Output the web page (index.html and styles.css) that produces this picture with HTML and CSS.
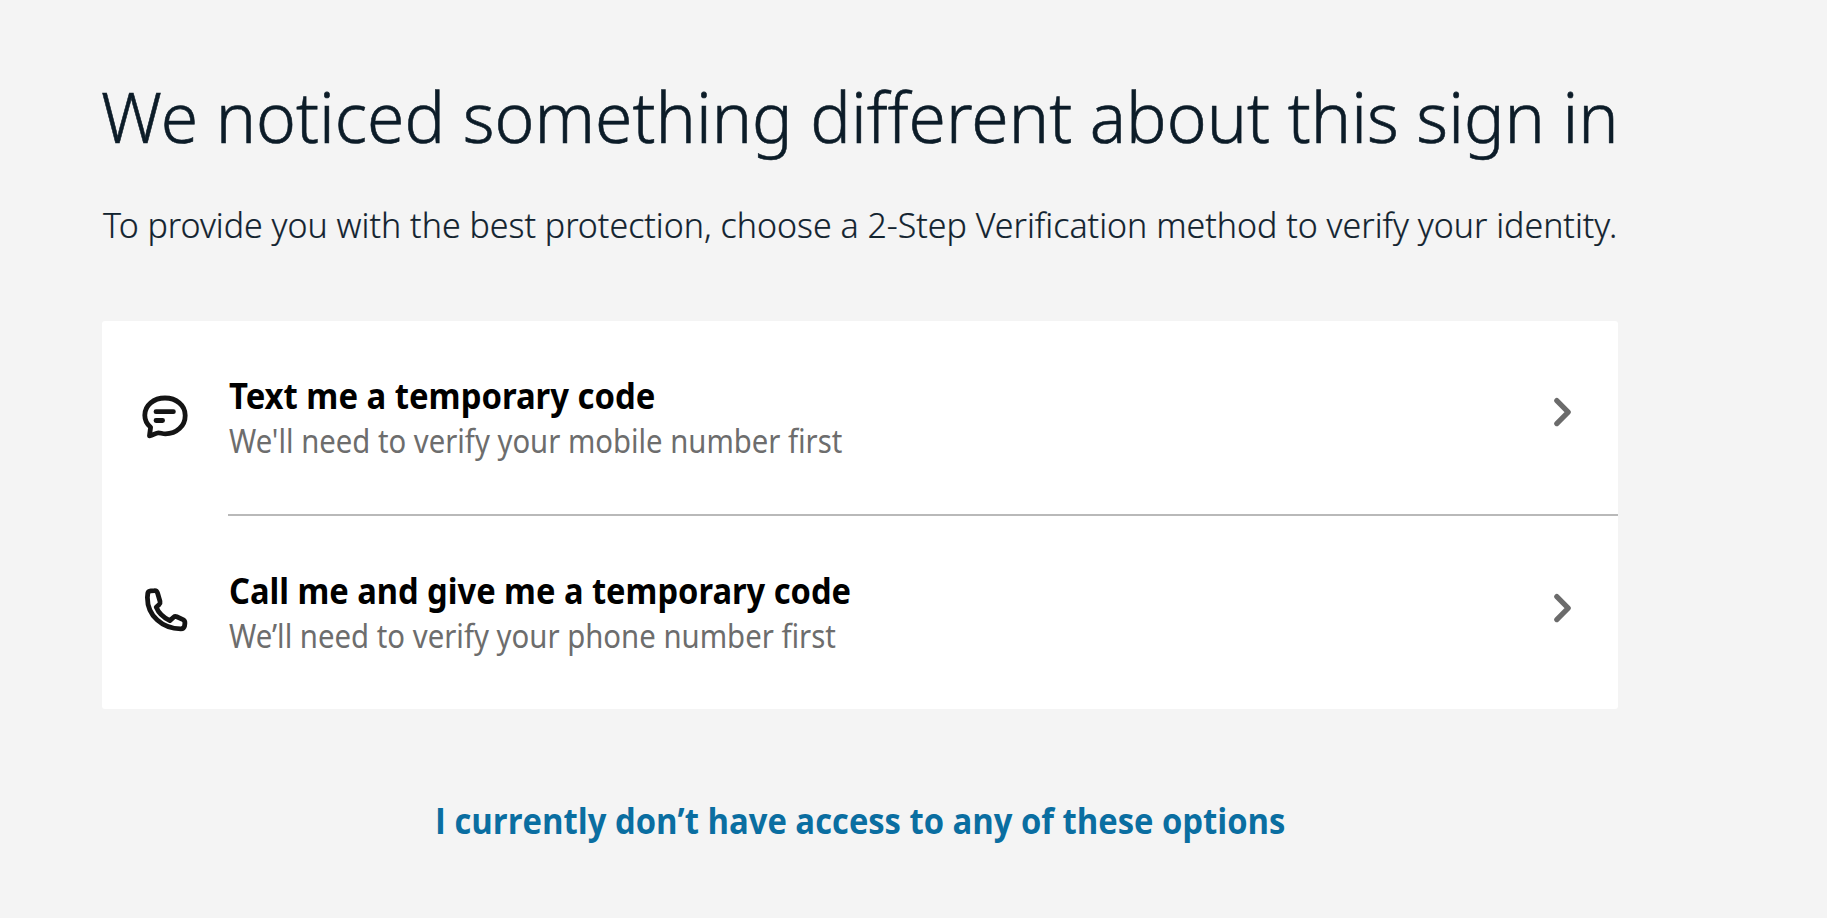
FILE: index.html
```html
<!DOCTYPE html>
<html lang="en">
<head>
<meta charset="utf-8">
<title>Verify your identity</title>
<link rel="stylesheet" href="styles.css">
</head>
<body>
<main class="page">
  <h1 class="heading"><span class="fit fit-heading">We noticed something different about this sign in</span></h1>
  <p class="intro"><span class="fit fit-intro">To provide you with the best protection, choose a 2-Step Verification method to verify your identity.</span></p>
  <div class="card">
    <a class="option">
      <svg class="icon" viewBox="0 0 70 70" fill="none" stroke="#141414" stroke-width="4.8" stroke-linecap="round" stroke-linejoin="round"><path d="M19.5 55.8L20.6 47.3C16.8 44 14.8 40 14.8 35.2C14.8 25.2 23.8 18 35 18C46.2 18 55.2 25.2 55.2 35.4C55.2 46 46.6 53.8 35.4 53.8C32.6 53.8 30.4 52.8 28.4 52.8C25.6 52.8 23.4 55.2 19.5 55.8Z"/><path d="M26 31.7H43.4M26 40.5H32.6"/></svg>
      <span class="text">
        <span class="title fit fit-text">Text me a temporary code</span>
        <span class="note fit fit-mobile">We'll need to verify your mobile number first</span>
      </span>
      <svg class="chevron" viewBox="0 0 18 32" fill="none" stroke="#6b6b6b" stroke-width="5.2" stroke-linecap="round" stroke-linejoin="round"><path d="M2.8 4.6L14.2 16.1L2.8 27.6"/></svg>
    </a>
    <a class="option option-next">
      <svg class="icon" viewBox="0 0 70 70" fill="none" stroke="#141414" stroke-width="4.8" stroke-linecap="round" stroke-linejoin="round"><path d="M17.8 18.2Q18.2 16 20.8 15.8L24.4 15.6Q26.8 15.4 27.6 18.2L30 26.4Q30.4 28.2 29.2 29.4L26.2 32.2C28.4 37.6 33.8 42.8 39.8 45.6L43.6 42.2Q45 41 46.8 41.8L53 44.6Q55 45.6 54.9 48L54.6 50.8Q54 53.9 50.8 53.9C32.6 53.8 17.4 41 17.4 22.4Z"/></svg>
      <span class="text">
        <span class="title fit fit-call">Call me and give me a temporary code</span>
        <span class="note fit fit-phone">We’ll need to verify your phone number first</span>
      </span>
      <svg class="chevron" viewBox="0 0 18 32" fill="none" stroke="#6b6b6b" stroke-width="5.2" stroke-linecap="round" stroke-linejoin="round"><path d="M2.8 4.6L14.2 16.1L2.8 27.6"/></svg>
    </a>
  </div>
  <a class="fallback"><span class="fit fit-link">I currently don’t have access to any of these options</span></a>
</main>
<script>
  // Condense each line to the width given by its --w property.
  document.querySelectorAll('.fit').forEach(function (el) {
    var target = parseFloat(getComputedStyle(el).getPropertyValue('--w'));
    el.style.transform = 'scaleX(' + target / el.offsetWidth + ')';
  });
</script>
</body>
</html>
```
FILE: styles.css
```css
* { box-sizing: border-box; }
body {
  margin: 0;
  background: #f4f4f4;
  font-family: "Noto Sans", "Open Sans", sans-serif;
  overflow: hidden;
}
.page {
  display: flex;
  flex-direction: column;
  width: 1618px;
  height: 918px;
  padding: 69px 0 0 101px;
}
.fit {
  display: block;
  width: max-content;
  white-space: nowrap;
  transform-origin: left center;
}
.fit-heading { --w: 1518; }
.fit-intro { --w: 1514; }
.fit-text { --w: 426; }
.fit-mobile { --w: 613; }
.fit-call { --w: 622; }
.fit-phone { --w: 607; }
.fit-link { --w: 850; }
.heading {
  margin: 0;
  height: 94px;
  font-size: 70px;
  line-height: 94px;
  font-weight: 300;
  color: #0c1c28;
  -webkit-text-stroke: 0.6px #0c1c28;
}
.intro {
  margin: 38px 0 72px 2px;
  height: 48px;
  font-size: 35px;
  line-height: 48px;
  font-weight: 300;
  color: #12232f;
  -webkit-text-stroke: 0.2px #12232f;
}
.card {
  width: 1516px;
  height: 388px;
  margin-left: 1px;
  background: #fff;
  border-radius: 3px;
  display: grid;
  grid-template-rows: 193px 195px;
}
.option { display: flex; align-items: flex-start; }
.icon { flex: none; width: 70px; height: 70px; margin: 59px 0 0 28px; }
.text {
  flex: 1;
  height: 195px;
  margin-left: 28px;
  padding: 51px 0 0 1px;
  border-bottom: 2px solid #b9b9b9;
}
.chevron {
  flex: none;
  width: 64px;
  height: 195px;
  padding: 75px 46px 86px 0;
  border-bottom: 2px solid #b9b9b9;
}
.option-next .icon { margin-top: 61px; }
.option-next .text { padding-top: 53px; border: 0; }
.option-next .chevron { padding: 78px 46px 85px 0; border: 0; }
.title { font-size: 35px; line-height: 48px; font-weight: 700; color: #000; }
.note { font-size: 32px; line-height: 44px; font-weight: 400; color: #6d6d6d; margin-top: -1px; }
.fallback {
  width: max-content;
  margin: 88px 0 0 334px;
  font-family: "Open Sans", sans-serif;
  font-size: 35px;
  line-height: 48px;
  font-weight: 700;
  color: #0a6ea1;
}
```
